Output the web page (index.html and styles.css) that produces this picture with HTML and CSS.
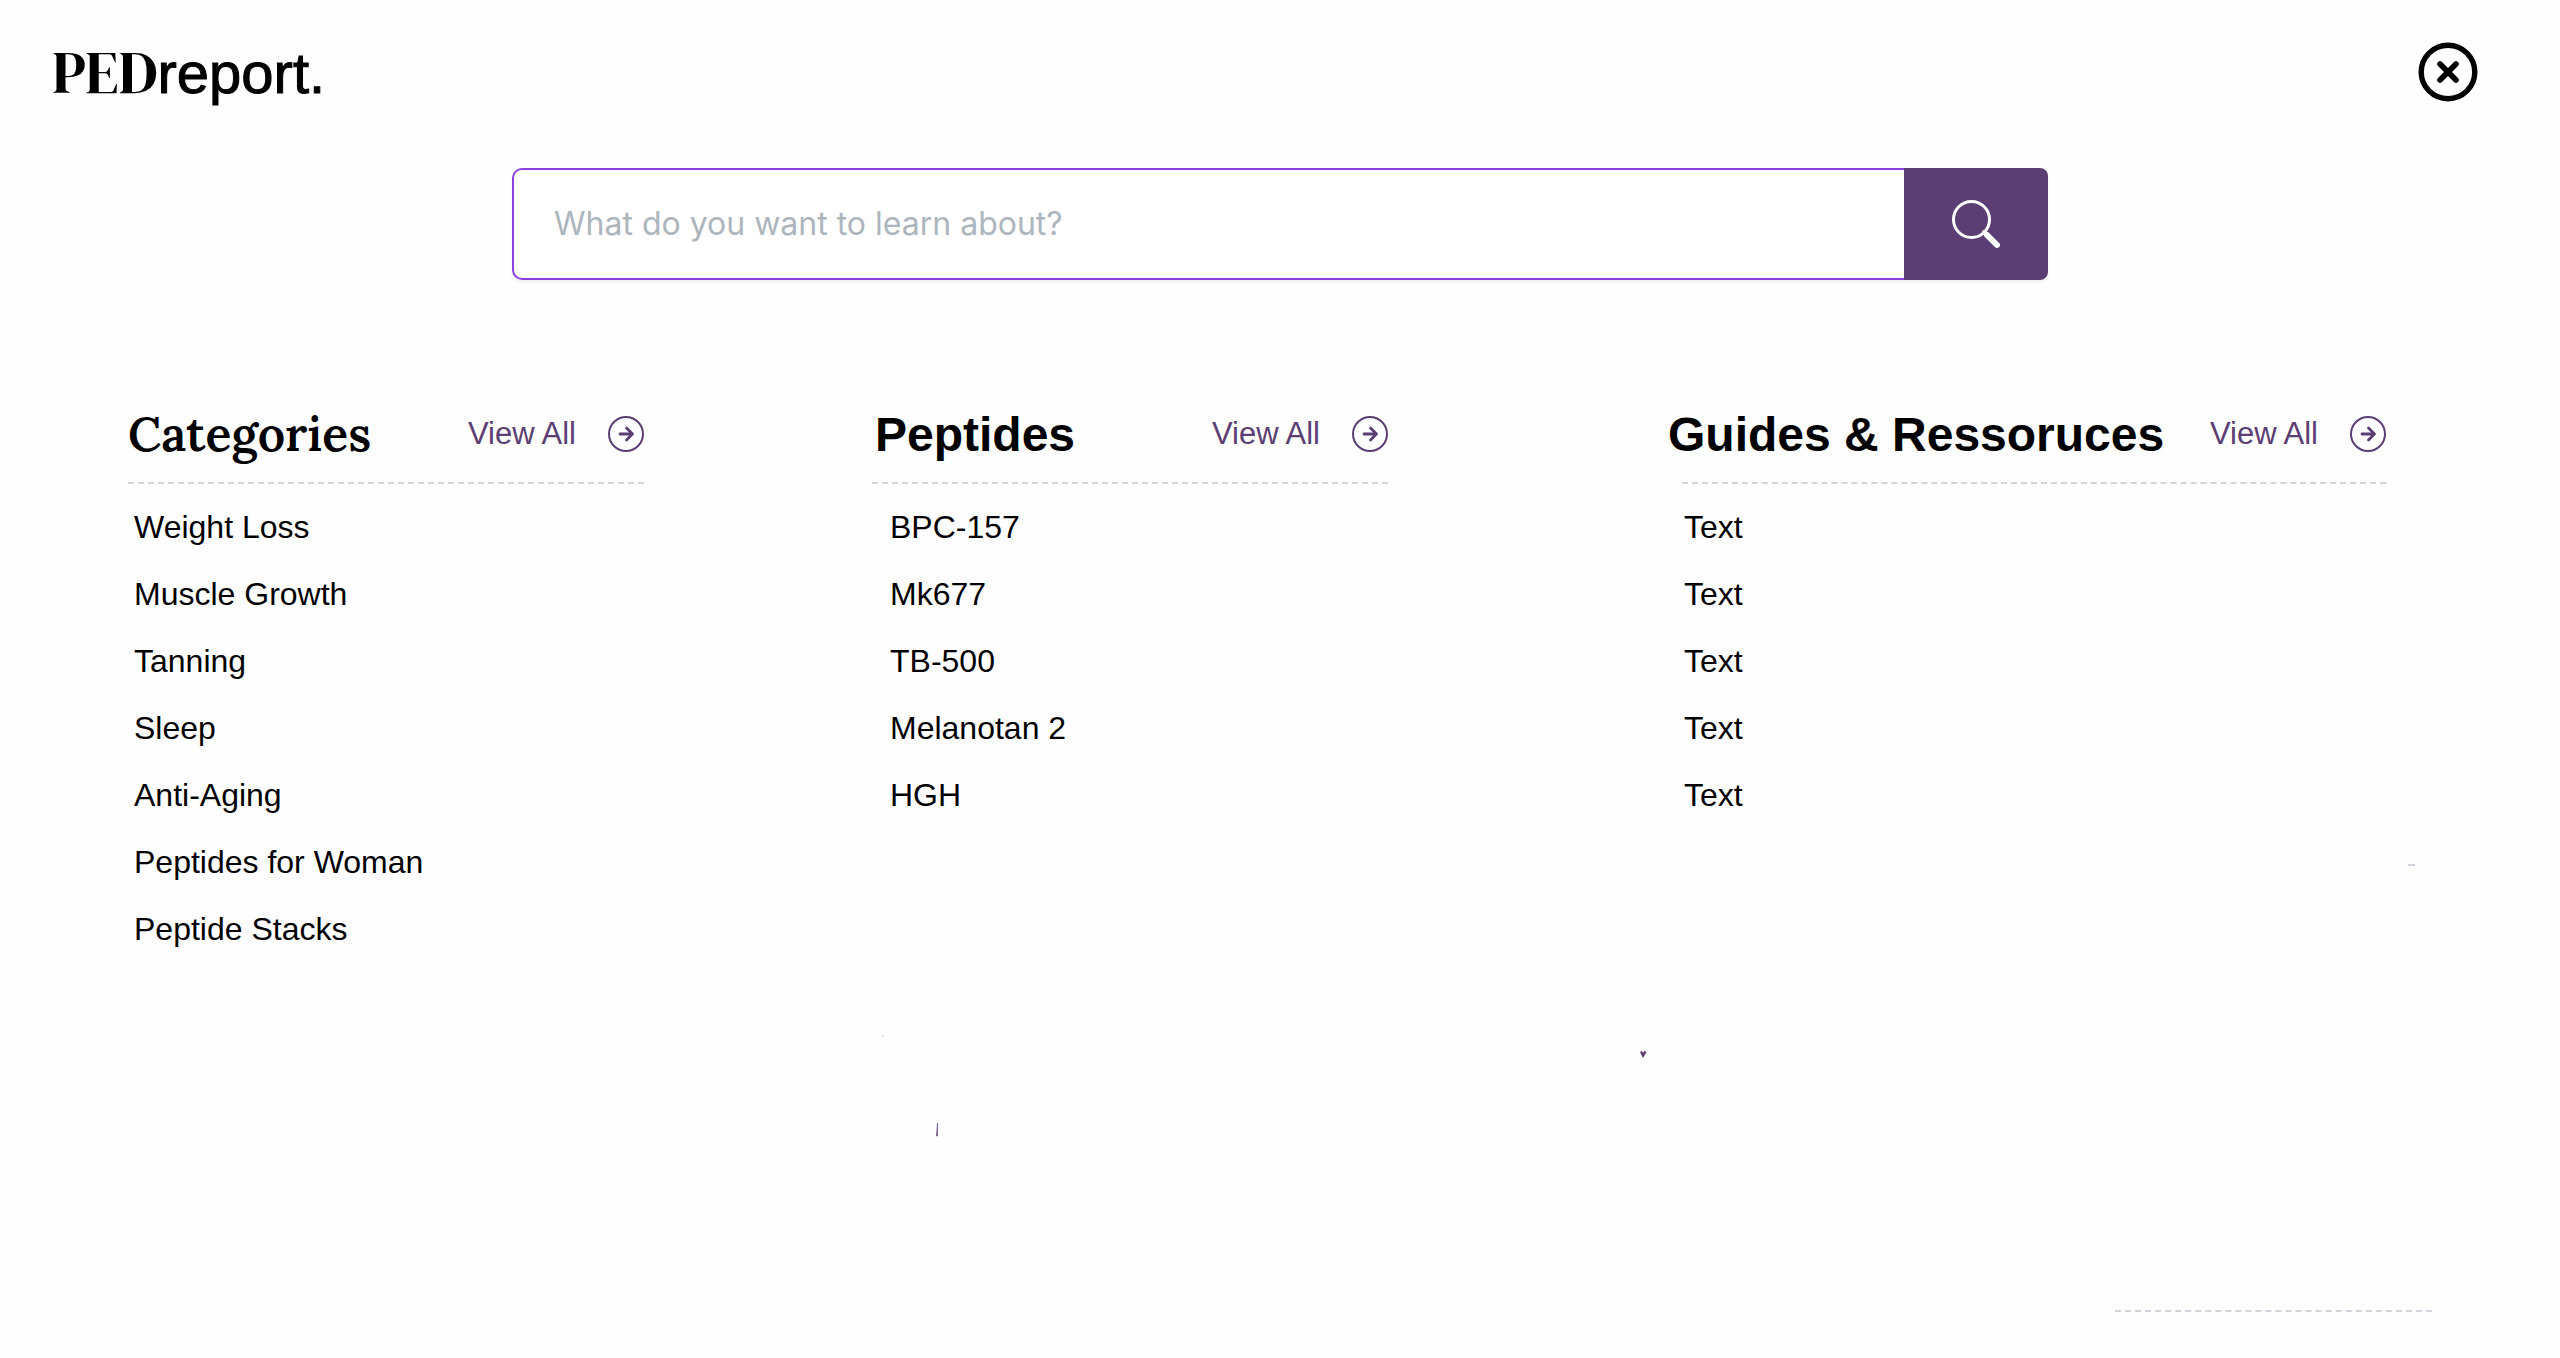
FILE: index.html
```html
<!DOCTYPE html>
<html lang="en">
<head>
<meta charset="utf-8">
<meta name="viewport" content="width=device-width, initial-scale=1">
<title>PEDreport.</title>
<link rel="stylesheet" href="styles.css">
</head>
<body>
<svg width="0" height="0" class="sprite" aria-hidden="true">
  <symbol id="arrow" viewBox="0 0 36 36">
    <circle cx="18" cy="18" r="17" fill="none" stroke="currentColor" stroke-width="2"/>
    <path d="M12 18H24M18.500 12L24.500 18L18.500 24" fill="none" stroke="currentColor" stroke-width="2.800" stroke-linecap="round" stroke-linejoin="round"/>
  </symbol>
</svg>
<div class="page">
  <header class="topbar">
    <a class="logo" href="#"><span class="logo-serif">PED</span>report.</a>
    <button class="close" type="button" aria-label="Close">
      <svg viewBox="0 0 60 60" fill="none" stroke="currentColor" stroke-linecap="round">
        <circle cx="30" cy="30" r="26.800" stroke-width="5.400"/>
        <path d="M22 22L38 38M38 22L22 38" stroke-width="5.600"/>
      </svg>
    </button>
  </header>

  <form class="search" role="search">
    <input class="search-input" type="search" aria-label="Search" placeholder="What do you want to learn about?">
    <button class="search-button" type="submit" aria-label="Search">
      <svg viewBox="0 0 50 50" fill="none" stroke="currentColor" stroke-linecap="round">
        <circle cx="20.500" cy="20.500" r="18" stroke-width="3"/>
        <path d="M33 33L35 35" stroke-width="4"/>
        <path d="M36 36L46 46" stroke-width="6"/>
      </svg>
    </button>
  </form>

  <main class="columns">
    <section class="column categories">
      <div class="column-head">
        <h2 class="title title-serif">Categories</h2>
        <a class="view-all" href="#">View All <svg aria-hidden="true"><use href="#arrow"/></svg></a>
      </div>
      <div class="rule"></div>
      <ul class="list">
        <li><a href="#">Weight Loss</a></li>
        <li><a href="#">Muscle Growth</a></li>
        <li><a href="#">Tanning</a></li>
        <li><a href="#">Sleep</a></li>
        <li><a href="#">Anti-Aging</a></li>
        <li><a href="#">Peptides for Woman</a></li>
        <li><a href="#">Peptide Stacks</a></li>
      </ul>
    </section>

    <section class="column peptides">
      <div class="column-head">
        <h2 class="title">Peptides</h2>
        <a class="view-all" href="#">View All <svg aria-hidden="true"><use href="#arrow"/></svg></a>
      </div>
      <div class="rule"></div>
      <ul class="list">
        <li><a href="#">BPC-157</a></li>
        <li><a href="#">Mk677</a></li>
        <li><a href="#">TB-500</a></li>
        <li><a href="#">Melanotan 2</a></li>
        <li><a href="#">HGH</a></li>
      </ul>
    </section>

    <section class="column guides">
      <div class="column-head">
        <h2 class="title">Guides &amp; Ressoruces</h2>
        <a class="view-all" href="#">View All <svg aria-hidden="true"><use href="#arrow"/></svg></a>
      </div>
      <div class="rule"></div>
      <ul class="list">
        <li><a href="#">Text</a></li>
        <li><a href="#">Text</a></li>
        <li><a href="#">Text</a></li>
        <li><a href="#">Text</a></li>
        <li><a href="#">Text</a></li>
      </ul>
    </section>
  </main>

  <footer class="footer"><div class="rule"></div></footer>

  <svg class="specks" viewBox="0 0 1560 300" aria-hidden="true">
    <path d="M2 176h1.500v2H2z" fill="#ddd"/>
    <path d="M57.500 264V277H56.500Z" fill="#5b3e73" stroke="#5b3e73" stroke-width=".6"/>
    <path d="M761 192.500L763 196.500L765.500 192.500" fill="none" stroke="#5b3e73" stroke-width="2.400"/>
    <path d="M1528 6h7" stroke="#a9a5b5" stroke-width="1"/>
    <path d="M1250 36h2v2h-2z" fill="#f2f2f2"/>
  </svg>
</div>
</body>
</html>
```

FILE: styles.css
```css
* {
  box-sizing: border-box;
}

body {
  margin: 0;
  background: #fefefe;
  color: #000;
  font-family: "Liberation Sans", Arial, sans-serif;
}

a {
  color: inherit;
  text-decoration: none;
}

.sprite {
  position: absolute;
}

.page {
  position: relative;
  display: flex;
  flex-direction: column;
  min-height: 100vh;
}

.topbar {
  display: flex;
  align-items: center;
  justify-content: space-between;
  height: 144px;
  padding: 0 82px 0 52px;
}

.logo {
  font-size: 58px;
  line-height: 64px;
  -webkit-text-stroke: 1px #000;
}

.logo-serif {
  font-family: "DM Serif Display", "Playfair Display", "Liberation Serif", "Times New Roman", serif;
  font-size: 60px;
  -webkit-text-stroke: 0;
}

.close {
  width: 60px;
  height: 60px;
  padding: 0;
  border: 0;
  background: none;
  color: #000;
}

.close svg {
  display: block;
  width: 60px;
  height: 60px;
}

.search {
  display: flex;
  width: 60%;
  height: 112px;
  margin: 24px auto 0;
  border-radius: 8px;
  box-shadow: 0 2px 4px rgba(0, 0, 0, 0.06);
}

.search-input {
  flex: 1;
  min-width: 0;
  padding: 0 40px 2px;
  border: 2px solid #8a3fe0;
  border-right: 0;
  border-radius: 10px 0 0 10px;
  outline: 0;
  background: #fff;
  appearance: none;
  font-family: Inter, sans-serif;
  font-size: 32px;
}

.search-input::placeholder {
  color: #adb5bd;
  opacity: 1;
}

.search-button {
  display: flex;
  align-items: center;
  justify-content: center;
  width: 144px;
  padding: 0;
  border: 0;
  border-radius: 0 8px 8px 0;
  background: #5b3e73;
  color: #fff;
}

.search-button svg {
  width: 50px;
  height: 50px;
}

.columns {
  display: grid;
  grid-template-columns: 744fr 796fr 718fr;
  padding: 122px 174px 0 128px;
}

.categories {
  padding-right: 228px;
}

.peptides {
  padding-right: 280px;
}

.peptides .title {
  padding-left: 3px;
}

.column-head {
  display: flex;
  align-items: center;
  justify-content: space-between;
  height: 64px;
}

.title {
  margin: 0;
  padding-top: 2px;
  font-size: 48px;
  line-height: 64px;
  white-space: nowrap;
}

.title-serif {
  padding-top: 0;
  font-family: Lora, "Liberation Serif", serif;
  font-weight: 600;
}

.view-all {
  display: flex;
  align-items: center;
  gap: 32px;
  color: #5b3e73;
  font-size: 31px;
  line-height: 36px;
  white-space: nowrap;
}

.view-all svg {
  width: 36px;
  height: 36px;
}

.rule {
  margin-top: 16px;
  border-top: 2px dashed #d1d5db;
}

.list {
  margin: 0;
  padding: 10px 0 0 6px;
  list-style: none;
  font-size: 32px;
  line-height: 67px;
}

.peptides .list {
  padding-left: 18px;
}

.guides .rule {
  margin-left: 14px;
}

.guides .list {
  padding-left: 16px;
}

.footer {
  display: flex;
  justify-content: flex-end;
  margin-top: auto;
  padding: 0 128px 46px;
}

.footer .rule {
  width: 317px;
}

.specks {
  position: absolute;
  top: 859px;
  left: 880px;
  width: 1560px;
  height: 300px;
  pointer-events: none;
}
```
